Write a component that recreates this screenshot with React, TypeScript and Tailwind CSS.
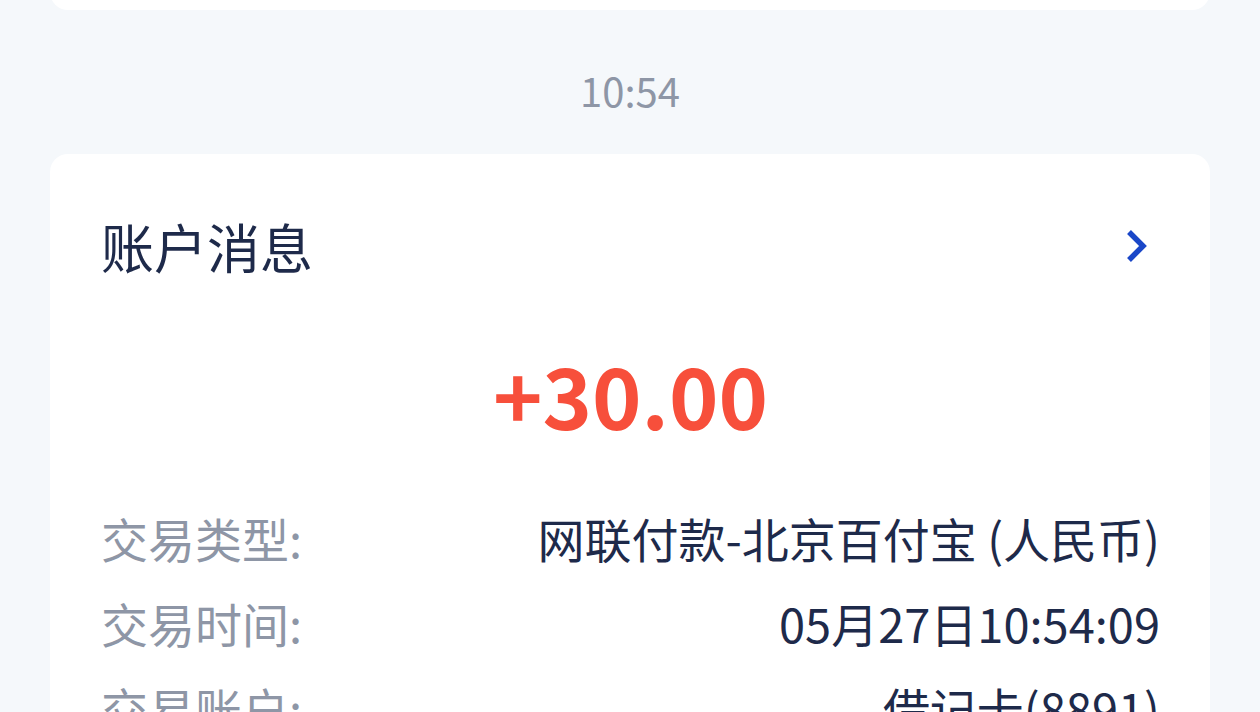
const rows = [
  { label: "交易类型:", value: "网联付款-北京百付宝 (人民币)" },
  { label: "交易时间:", value: "05月27日10:54:09" },
  { label: "交易账户:", value: "借记卡(8891)" },
];

export default function App() {
  return (
    <div
      className="h-[712px] w-[1260px] overflow-hidden bg-[#f5f8fb] px-[50px]"
      style={{ fontFamily: '"Noto Sans CJK SC", "Noto Sans", sans-serif' }}
    >
      <div className="-mt-[40px] h-[50px] rounded-b-[18px] bg-white" />

      <div className="flex h-[144px] items-center justify-center pt-[16px] text-[40px] text-[#8e96a6]">
        10:54
      </div>

      <div className="rounded-[18px] bg-white pl-[51px] pr-[50px] pt-[62px] pb-[40px]">
        <div className="flex items-center justify-between">
          <span className="text-[53px] leading-[60px] text-[#1e2a4a]">账户消息</span>
          <svg width="24" height="38" viewBox="0 0 24 38" className="mr-[12px]" fill="none">
            <path d="M5 5 L19 19 L5 33" stroke="#1a47c8" strokeWidth="5.5" />
          </svg>
        </div>

        <div className="mt-[68px] text-center text-[84px] font-bold leading-[100px] text-[#f74f3b]">
          +30.00
        </div>

        <div className="mt-[52px] flex flex-col">
          {rows.map((r) => (
            <div key={r.label} className="flex h-[85px] items-center justify-between text-[47px]">
              <span className="text-[#8e96a6]">{r.label}</span>
              <span className="text-[#1e2a4a]">{r.value}</span>
            </div>
          ))}
        </div>
      </div>
    </div>
  );
}
